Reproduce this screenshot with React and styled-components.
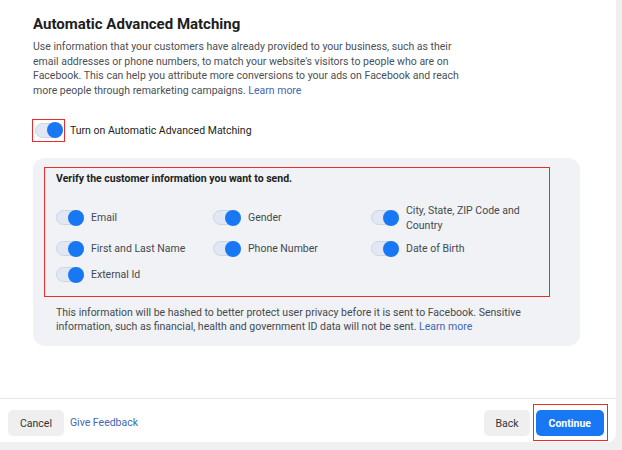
import styled, { createGlobalStyle } from 'styled-components';

const GlobalStyle = createGlobalStyle`
    html, body {
        margin: 0;
        padding: 0;
        background: #f0f0f0;
    }
    body {
        font-family: Roboto, "Liberation Sans", Arial, sans-serif;
        -webkit-font-smoothing: antialiased;
    }
`;

const Card = styled.div`
    width: 616px;
    height: 442px;
    background: #fff;
    border-bottom-right-radius: 8px;
    display: flex;
    flex-direction: column;
`;

const Content = styled.div`
    flex: 1;
    padding: 14px 0 0 33px;
`;

const Titulo = styled.h2`
    margin: 0;
    font-size: 15px;
    line-height: 20px;
    font-weight: 700;
    color: #1c1e21;
`;

const Texto = styled.p`
    margin: 6px 0 0;
    width: 436px;
    font-size: 10.5px;
    line-height: 14.7px;
    color: #4b4f56;
`;

const Link = styled.a`
    color: #4267b2;
    text-decoration: none;
    cursor: pointer;
`;

const Destaque = styled.span`
    display: inline-flex;
    align-items: center;
    border: 1px solid #ee2b2b;
    padding: ${props => props.$pad || '2px'};
`;

const LinhaToggle = styled.div`
    display: flex;
    align-items: center;
    gap: 5px;
    margin-top: 20px;
    margin-left: -1px;
    font-size: 10.5px;
    color: #1c1e21;
`;

const Trilho = styled.span`
    position: relative;
    display: inline-block;
    flex: none;
    width: 28px;
    height: 15px;
    border-radius: 8px;
    background: #e1e8f3;
    border: 1px solid #ccd5e2;
    box-sizing: border-box;
`;

const Bolinha = styled.span`
    position: absolute;
    right: -1px;
    top: 50%;
    width: 16px;
    height: 16px;
    margin-top: -8px;
    border-radius: 50%;
    background: #1877f2;
`;

const Painel = styled.div`
    margin-top: 16px;
    width: 547px;
    background: #f0f2f5;
    border-radius: 12px;
    padding: 9px 0 12px 11px;
    box-sizing: border-box;
`;

const Caixa = styled.div`
    width: 506px;
    box-sizing: border-box;
    border: 1px solid #ee2b2b;
    padding: 3px 0 11px 11px;
`;

const SubTitulo = styled.div`
    font-size: 10.5px;
    line-height: 15px;
    font-weight: 700;
    color: #1c1e21;
`;

const Grade = styled.div`
    display: grid;
    grid-template-columns: 157px 158px 155px;
    row-gap: 6px;
    align-items: center;
    margin-top: 17px;
`;

const Opcao = styled.label`
    display: flex;
    align-items: center;
    gap: 7px;
    min-height: 20px;
    font-size: 10.5px;
    line-height: 15px;
    color: #444950;
`;

const Nota = styled.p`
    margin: 9px 0 0 12px;
    width: 485px;
    font-size: 10.5px;
    line-height: 14px;
    color: #444950;
`;

const Rodape = styled.div`
    height: 44px;
    border-top: 1px solid #e6e6e6;
    box-sizing: border-box;
    padding: 11px 12px 6px 8px;
    display: flex;
    align-items: flex-start;
    gap: 6px;
`;

const Botao = styled.button`
    height: 26px;
    padding: 0 ${props => props.$px || '12px'};
    border: none;
    border-radius: 5px;
    font-family: inherit;
    font-size: 10.5px;
    font-weight: ${props => (props.$primario ? 700 : 400)};
    background: ${props => (props.$primario ? '#1877f2' : '#efefef')};
    color: ${props => (props.$primario ? '#fff' : '#333')};
    cursor: pointer;
`;

const FeedbackLink = styled(Link)`
    font-size: 10.5px;
    line-height: 26px;
`;

const Espaco = styled.div`
    flex: 1;
`;

const DestaqueBotao = styled(Destaque)`
    margin: -6px -4px 0 -3px;
    padding: 5px 3px 4px 2px;
`;

function Toggle() {
    return (
        <Trilho>
            <Bolinha />
        </Trilho>
    );
}

const opcoes = [
    'Email',
    'Gender',
    'City, State, ZIP Code and Country',
    'First and Last Name',
    'Phone Number',
    'Date of Birth',
    'External Id',
];

export default function App() {
    return (
        <>
            <GlobalStyle />
            <Card>
                <Content>
                    <Titulo>Automatic Advanced Matching</Titulo>
                    <Texto>
                        Use information that your customers have already provided to your business, such as their
                        email addresses or phone numbers, to match your website's visitors to people who are on
                        Facebook. This can help you attribute more conversions to your ads on Facebook and reach
                        more people through remarketing campaigns. <Link>Learn more</Link>
                    </Texto>
                    <LinhaToggle>
                        <Destaque $pad="3px 1px 3px 2px">
                            <Toggle />
                        </Destaque>
                        Turn on Automatic Advanced Matching
                    </LinhaToggle>
                    <Painel>
                        <Caixa>
                            <SubTitulo>Verify the customer information you want to send.</SubTitulo>
                            <Grade>
                                {opcoes.map(opcao => (
                                    <Opcao key={opcao}>
                                        <Toggle />
                                        <span>{opcao}</span>
                                    </Opcao>
                                ))}
                            </Grade>
                        </Caixa>
                        <Nota>
                            This information will be hashed to better protect user privacy before it is sent to Facebook. Sensitive
                            information, such as financial, health and government ID data will not be sent. <Link>Learn more</Link>
                        </Nota>
                    </Painel>
                </Content>
                <Rodape>
                    <Botao $px="12px">Cancel</Botao>
                    <FeedbackLink>Give Feedback</FeedbackLink>
                    <Espaco />
                    <Botao $px="11px">Back</Botao>
                    <DestaqueBotao>
                        <Botao $primario $px="13px">Continue</Botao>
                    </DestaqueBotao>
                </Rodape>
            </Card>
        </>
    );
}
